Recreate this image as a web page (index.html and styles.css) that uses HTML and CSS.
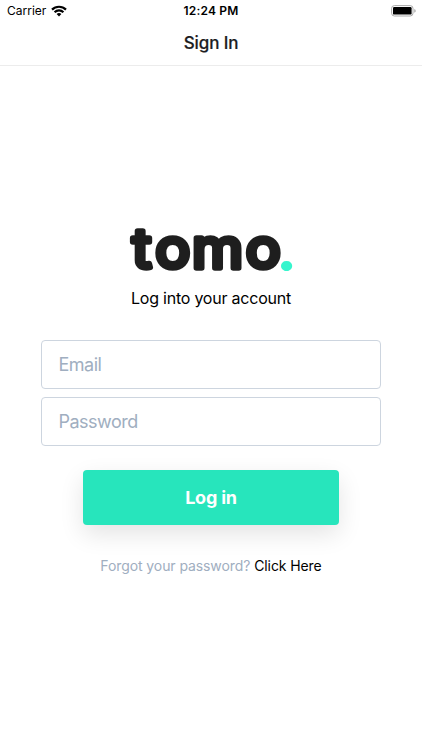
FILE: index.html
```html
<!DOCTYPE html>
<html lang="en">
<head>
    <meta charset="UTF-8">
    <meta name="viewport" content="width=device-width, initial-scale=1.0">
    <title>Sign In</title>
    <link rel="stylesheet" href="styles.css">
</head>
<body>

<div class="status-bar">
    <div class="carrier">
        <span>Carrier</span>
        <svg class="wifi" width="16" height="12" viewBox="0 0 16 12" fill="none" stroke="#000" stroke-width="2.2">
            <path d="M1 4.6a10 10 0 0 1 14 0"/>
            <path d="M3.6 7.3a6.2 6.2 0 0 1 8.8 0"/>
            <path d="M5.6 9.1a3.5 3.5 0 0 1 4.8 0L8 11.5z" fill="#000" stroke="none"/>
        </svg>
    </div>
    <span class="time">12:24 PM</span>
    <svg class="battery" width="26" height="12" viewBox="0 0 26 12">
        <rect x=".6" y=".6" width="21.4" height="10.4" rx="2.8" fill="#fff" stroke="#a9a9a9"/>
        <rect x="2" y="2" width="18.6" height="7.6" rx="1.2"/>
        <path d="M23.4 4v3.8c1.6-.6 1.6-3.2 0-3.8z" fill="#999"/>
    </svg>
</div>

<header class="nav-bar">
    <h1>Sign In</h1>
</header>

<main class="login">
    <svg class="logo" width="190" height="80" viewBox="0 0 190 80">
        <text class="logo-text" transform="scale(1.08 1)" y="62" x="15 36.3 70.4 120.1">tomo<tspan class="logo-dot" x="150.4" y="65">.</tspan></text>
    </svg>
    <p class="subtitle">Log into your account</p>

    <form class="login-form">
        <input type="email" placeholder="Email">
        <input type="password" placeholder="Password">
        <button type="button">Log in</button>
    </form>

    <p class="forgot">Forgot your password? <a href="#">Click Here</a></p>
</main>

</body>
</html>
```
FILE: styles.css
```css
* {
    box-sizing: border-box;
}
body {
    margin: 0;
    height: 100vh;
    background-color: #fff;
    color: #000;
    font-family: Inter, "Liberation Sans", sans-serif;
    overflow: hidden;
}

/* status bar */
.status-bar {
    display: grid;
    grid-template-columns: 1fr auto 1fr;
    align-items: center;
    height: 21px;
    padding: 0 5px 0 7px;
    font-size: 12px;
}
.carrier {
    display: flex;
    align-items: center;
    gap: 5px;
}
.time {
    font-weight: 600;
    letter-spacing: 0.2px;
    margin-right: 2px;
}
.battery {
    justify-self: end;
}

/* navigation bar */
.nav-bar {
    display: flex;
    align-items: center;
    justify-content: center;
    height: 45px;
    border-bottom: 1px solid #ececec;
}
.nav-bar h1 {
    margin: 0;
    font-size: 17px;
    font-weight: 500;
    letter-spacing: -0.1px;
    color: #1c1c1e;
    -webkit-text-stroke: 0.2px #1c1c1e;
}

/* login */
.login {
    display: flex;
    flex-direction: column;
    align-items: center;
    padding: 140px 41px 0;
}
.logo {
    display: block;
}
.logo-text {
    font-size: 54px;
    font-weight: 400;
    fill: #1e1e1e;
    stroke: #1e1e1e;
    stroke-width: 5.4px;
    stroke-linejoin: round;
}
.logo-dot {
    font-family: Lato, sans-serif;
    font-size: 63px;
    font-weight: 900;
    fill: #36f5cd;
    stroke: none;
}
.subtitle {
    margin: 2px 0 0;
    font-size: 16px;
    line-height: 20px;
    letter-spacing: -0.22px;
}
.login-form {
    display: flex;
    flex-direction: column;
    align-items: center;
    width: 100%;
    margin-top: 32px;
}
.login-form input {
    width: 100%;
    height: 49px;
    margin-bottom: 8px;
    padding: 0 17px 0 16.5px;
    border: 1px solid #cdd5df;
    border-radius: 4px;
    background-color: #fff;
    font-family: inherit;
    font-size: 18px;
    letter-spacing: -0.5px;
    outline: none;
}
.login-form input::placeholder {
    color: #a0aec0;
}
.login-form button {
    width: 256px;
    height: 55px;
    margin-top: 16px;
    border: none;
    border-radius: 4px;
    background-color: #27e5bc;
    box-shadow: 0 9px 24px rgba(0, 0, 0, 0.11);
    color: #fff;
    font-family: inherit;
    font-size: 18px;
    font-weight: 700;
    letter-spacing: -0.2px;
}
.forgot {
    margin: 31px 0 0;
    font-size: 14px;
    line-height: 20px;
    letter-spacing: -0.09px;
    color: #a0aec0;
}
.forgot a {
    color: #000;
    text-decoration: none;
}
```
